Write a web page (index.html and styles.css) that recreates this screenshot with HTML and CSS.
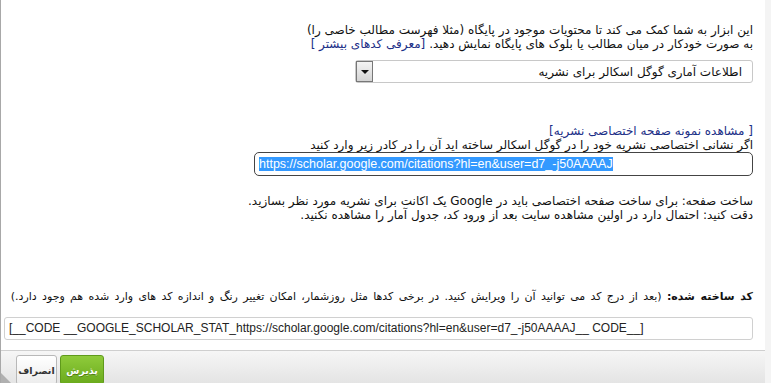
FILE: index.html
```html
<!DOCTYPE html>
<html lang="fa" dir="rtl">
<head>
<meta charset="UTF-8">
<title>ابزار کد</title>
<link rel="stylesheet" href="styles.css">
</head>
<body>

<div class="dialog">
  <div class="content">
    <div class="intro">
      <div class="line">این ابزار به شما کمک می کند تا محتویات موجود در پایگاه (مثلا فهرست مطالب خاصی را)</div>
      <div class="line">به صورت خودکار در میان مطالب یا بلوک های پایگاه نمایش دهید. <a href="#">[معرفی کدهای بیشتر ]</a></div>
    </div>

    <div class="select">
      <span class="select-text">اطلاعات آماری گوگل اسکالر برای نشریه</span>
      <span class="select-btn"><span class="arrow"></span></span>
    </div>

    <div class="sample">
      <div class="line"><a href="#">[ مشاهده نمونه صفحه اختصاصی نشریه]</a></div>
      <div class="line">اگر نشانی اختصاصی نشریه خود را در گوگل اسکالر ساخته اید آن را در کادر زیر وارد کنید</div>
      <div class="url-input" dir="ltr"><span class="selected">https://scholar.google.com/citations?hl=en&amp;user=d7_-j50AAAAJ</span></div>
    </div>

    <div class="notes">
      <div class="line">ساخت صفحه: برای ساخت صفحه اختصاصی باید در Google یک اکانت برای نشریه مورد نظر بسازید.</div>
      <div class="line">دقت کنید: احتمال دارد در اولین مشاهده سایت بعد از ورود کد، جدول آمار را مشاهده نکنید.</div>
    </div>

    <div class="result">
      <div class="line small"><b>کد ساخته شده:</b> (بعد از درج کد می توانید آن را ویرایش کنید. در برخی کدها مثل روزشمار، امکان تغییر رنگ و اندازه کد های وارد شده هم وجود دارد.)</div>
      <div class="code-input" dir="ltr">[__CODE __GOOGLE_SCHOLAR_STAT_https://scholar.google.com/citations?hl=en&amp;user=d7_-j50AAAAJ__ CODE__]</div>
    </div>
  </div>

  <div class="footer">
    <button class="btn btn-cancel">انصراف</button>
    <button class="btn btn-ok">پذیرش</button>
    <span class="grip"></span>
  </div>
</div>

<div class="behind"></div>

</body>
</html>
```

FILE: styles.css
```css
html, body { margin: 0; padding: 0; height: 100%; }
body { background: #f2f2f2; font-family: "DejaVu Sans", sans-serif; font-size: 12px; color: #111; display: flex; flex-direction: row-reverse; justify-content: flex-end; overflow: hidden; }

.dialog { width: 765px; height: 383px; background: #fff; border-left: 1px solid #a8a8a8; display: flex; flex-direction: column; box-sizing: border-box; }
.behind { width: 6px; height: 383px; background: #f4f4f4; }

.content { flex: 1; padding: 23px 12px 0 12px; }
.line { line-height: 14px; white-space: nowrap; word-spacing: 0; }
.line.small { font-size: 11px; word-spacing: 1.8px; }
a { color: #1c2f87; text-decoration: none; }

.select { margin: 9px 0 0 0; width: 398px; height: 23px; box-sizing: border-box; border: 1px solid #c8c8c8; border-radius: 3px; display: flex; align-items: center; justify-content: space-between; padding-right: 10px; }
.select-text { font-size: 12px; }
.select-btn { width: 17px; height: 21px; box-sizing: border-box; border: 1px solid #777; background: linear-gradient(#f4f4f4, #d4d4d4); display: flex; align-items: center; justify-content: center; }
.arrow { width: 0; height: 0; border-left: 4px solid transparent; border-right: 4px solid transparent; border-top: 4px solid #111; }

.sample { margin-top: 41px; }
.url-input { width: 499px; height: 24px; box-sizing: border-box; border: 1px solid #444; border-radius: 5px; padding: 3px 4px; font-family: "Liberation Sans", sans-serif; font-size: 12.5px; line-height: 16px; text-align: left; }
.selected { background: #3399ff; color: #fff; }

.notes { margin-top: 18px; }

.result { margin-top: 68px; }
.code-input { margin-top: 13px; height: 23px; box-sizing: border-box; border: 1px solid #d0d0d0; border-radius: 3px; padding: 3px 4px; font-family: "Liberation Sans", sans-serif; font-size: 12px; line-height: 15px; text-align: left; color: #222; margin-left: -9px; }

.footer { direction: ltr; height: 33px; margin-top: 10px; box-sizing: border-box; border-top: 1px solid #cfcfcf; background: linear-gradient(#f6f6f6, #e4e4e4); display: flex; justify-content: flex-start; align-items: flex-start; padding: 4px 0 0 15px; gap: 3px; position: relative; }
.btn { height: 30px; margin: 0; border-radius: 3px; font-family: "DejaVu Sans", sans-serif; font-size: 9.5px; font-weight: bold; padding: 0; }
.btn-cancel { width: 41px; background: linear-gradient(#ffffff, #ececec); border: 1px solid #b8b8b8; color: #333; }
.btn-ok { width: 44px; background: linear-gradient(#8fcb3b, #6aaa1c); border: 1px solid #5f9a1b; color: #fff; text-shadow: 0 1px 0 #4a7a10; }
.grip { position: absolute; left: 0; bottom: 0; width: 0; height: 0; border-right: 10px solid transparent; border-bottom: 10px solid #b0b0b0; }
```
